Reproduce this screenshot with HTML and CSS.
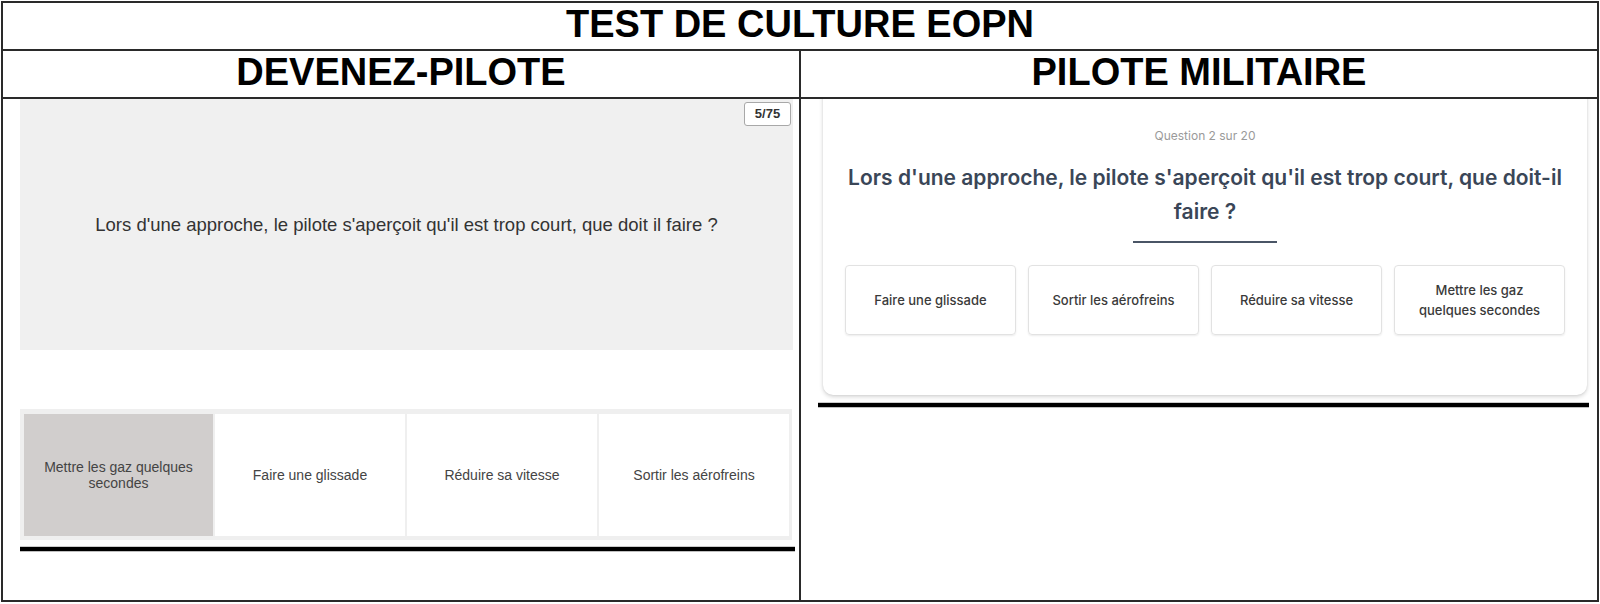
FILE: index.html
```html
<!DOCTYPE html>
<html lang="fr">
<head>
<meta charset="utf-8">
<title>Test de culture EOPN</title>
<link rel="stylesheet" href="styles.css">
</head>
<body>
<div class="sheet">
  <div class="title">TEST DE CULTURE EOPN</div>
  <div class="head head-left">DEVENEZ-PILOTE</div>
  <div class="head">PILOTE MILITAIRE</div>

  <div class="cell cell-left">
    <div class="dp-question">
      <span class="dp-counter">5/75</span>
      <p class="dp-text">Lors d'une approche, le pilote s'aperçoit qu'il est trop court, que doit il faire ?</p>
    </div>
    <div class="dp-options">
      <div class="dp-option dp-selected">Mettre les gaz quelques secondes</div>
      <div class="dp-option">Faire une glissade</div>
      <div class="dp-option">Réduire sa vitesse</div>
      <div class="dp-option">Sortir les aérofreins</div>
    </div>
    <div class="rule rule-left"></div>
  </div>

  <div class="cell">
    <div class="pm-card">
      <div class="pm-count">Question 2 sur 20</div>
      <h2 class="pm-question">Lors d'une approche, le pilote s'aperçoit qu'il est trop court, que doit-il faire ?</h2>
      <div class="pm-divider"></div>
      <div class="pm-options">
        <div class="pm-option">Faire une glissade</div>
        <div class="pm-option">Sortir les aérofreins</div>
        <div class="pm-option">Réduire sa vitesse</div>
        <div class="pm-option">Mettre les gaz quelques secondes</div>
      </div>
    </div>
    <div class="rule rule-right"></div>
  </div>
</div>
</body>
</html>
```

FILE: styles.css
```css
html, body {
  margin: 0;
  padding: 0;
  background: #ffffff;
}

.sheet {
  margin: 1px;
  width: 1598px;
  height: 601px;
  box-sizing: border-box;
  border: 2px solid #2a2a2a;
  display: grid;
  grid-template-columns: 798px 796px;
  grid-template-rows: 48px 48px 501px;
  font-family: "Liberation Sans", Arial, sans-serif;
  color: #000;
}

.title {
  grid-column: 1 / 3;
  border-bottom: 2px solid #2a2a2a;
  font-weight: bold;
  font-size: 38px;
  line-height: 42px;
  text-align: center;
}

.head {
  border-bottom: 2px solid #2a2a2a;
  font-weight: bold;
  font-size: 38px;
  line-height: 42px;
  text-align: center;
}

.head-left,
.cell-left {
  border-right: 2px solid #2a2a2a;
}

.cell {
  overflow: hidden;
  display: flex;
  flex-direction: column;
}

/* ---------- Devenez-pilote ---------- */
.dp-question {
  position: relative;
  margin: 0 6px 0 17px;
  height: 251px;
  background: #f0f0f0;
  display: flex;
  align-items: center;
  justify-content: center;
}

.dp-counter {
  position: absolute;
  top: 3px;
  right: 2px;
  width: 47px;
  height: 24px;
  box-sizing: border-box;
  border: 1px solid #a8a8a8;
  border-radius: 3px;
  background: #fff;
  font-size: 13px;
  font-weight: bold;
  color: #333;
  line-height: 22px;
  text-align: center;
}

.dp-text {
  margin: 0;
  font-size: 18.5px;
  color: #333;
}

.dp-options {
  margin: 59px 7px 0 17px;
  padding: 5px 3px 4px 4px;
  background: #efefef;
  display: grid;
  grid-template-columns: 189px 1fr 1fr 1fr;
  column-gap: 2px;
  height: 131px;
  box-sizing: border-box;
}

.dp-option {
  background: #ffffff;
  display: flex;
  align-items: center;
  justify-content: center;
  text-align: center;
  font-size: 14px;
  line-height: 16px;
  color: #444;
  padding: 0 12px;
}

.dp-selected {
  background: #d1cecd;
}

.rule {
  height: 4px;
  background: #000;
  box-shadow: 0 1px 0 rgba(0, 0, 0, 0.25), 0 -1px 0 rgba(0, 0, 0, 0.2);
}

.rule-left {
  margin: 7px 4px 0 17px;
}

/* ---------- Pilote militaire ---------- */
.pm-card {
  margin: -12px 10px 0 22px;
  padding: 41px 22px 60px;
  background: #fff;
  border-radius: 10px;
  box-shadow: 0 2px 4px rgba(0, 0, 0, 0.16), 0 0 2px rgba(0, 0, 0, 0.1);
  font-family: Inter, "Noto Sans", sans-serif;
  text-align: center;
}

.pm-count {
  font-size: 12px;
  line-height: 16px;
  color: #9a9a9a;
}

.pm-question {
  margin: 17px 0 0;
  font-size: 21px;
  line-height: 34px;
  font-weight: 600;
  color: #3a4657;
}

.pm-divider {
  width: 144px;
  height: 2px;
  margin: 12px auto 0;
  background: #4a5566;
}

.pm-options {
  margin-top: 22px;
  display: grid;
  grid-template-columns: repeat(4, 1fr);
  column-gap: 12px;
}

.pm-option {
  height: 70px;
  box-sizing: border-box;
  border: 1px solid #e2e2e2;
  border-radius: 4px;
  box-shadow: 0 1px 2px rgba(0, 0, 0, 0.08);
  display: flex;
  align-items: center;
  justify-content: center;
  padding: 0 14px;
  font-size: 13px;
  line-height: 20px;
  font-weight: 500;
  color: #3a3a3a;
}

.rule-right {
  margin: 8px 8px 0 17px;
}
```
